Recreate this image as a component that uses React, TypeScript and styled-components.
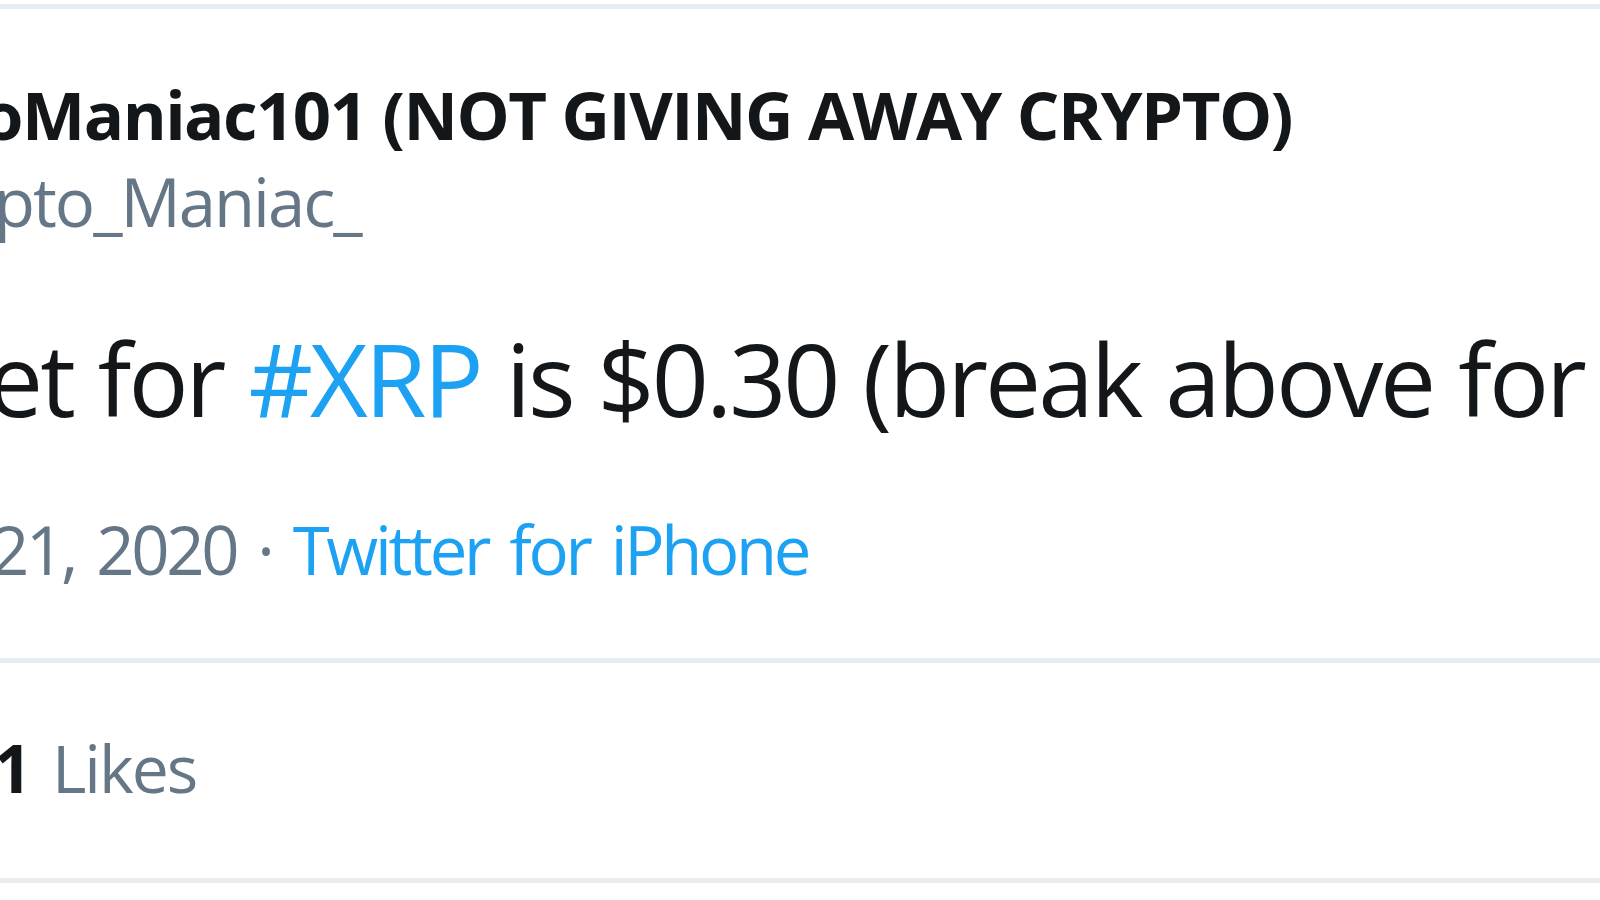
import React from "react";
import styled, { createGlobalStyle } from "styled-components";

const Global = createGlobalStyle`
  html, body { margin: 0; padding: 0; background: #ffffff; }
  body { font-family: "Open Sans", "Noto Sans", Arial, sans-serif; }
`;

const Page = styled.div`
  width: 1600px;
  height: 900px;
  overflow: hidden;
  background: #ffffff;
  display: flex;
  flex-direction: column;
`;

const Rule = styled.div<{ $top: number }>`
  height: 5px;
  margin-top: ${(p) => p.$top}px;
  background: #e6ecf0;
  flex: none;
`;

const Line = styled.div<{
  $size: number;
  $lh: number;
  $top: number;
  $indent?: number;
  $weight?: number;
  $color?: string;
  $spacing?: number;
  $words?: number;
}>`
  font-size: ${(p) => p.$size}px;
  line-height: ${(p) => p.$lh}px;
  margin-top: ${(p) => p.$top}px;
  margin-left: ${(p) => p.$indent ?? 0}px;
  font-weight: ${(p) => p.$weight ?? 400};
  color: ${(p) => p.$color ?? "#14171a"};
  letter-spacing: ${(p) => p.$spacing ?? 0}px;
  word-spacing: ${(p) => p.$words ?? 0}px;
  white-space: pre;
  flex: none;
`;

/* text that hangs to the left of the line start (clipped by the page edge) */
const Hang = styled.span`
  display: inline-flex;
  width: 0;
  justify-content: flex-end;
  white-space: pre;
`;

const Link = styled.span`
  color: #1da1f2;
`;

const Muted = styled.span`
  color: #657786;
`;

const Strong = styled.span`
  color: #14171a;
  font-weight: 700;
`;

export default function App() {
  return (
    <>
      <Global />
      <Page>
        <Rule $top={4} />
        <Line $size={67} $lh={80} $top={65} $indent={22} $weight={700} $spacing={-1.5}>
          <Hang>Crypto</Hang>Maniac101 (NOT GIVING AWAY CRYPTO)
        </Line>
        <Line $size={67} $lh={80} $top={7} $indent={-6} $color="#657786" $spacing={-2}>
          <Hang>@Cry</Hang>pto_Maniac_
        </Line>
        <Line $size={100} $lh={120} $top={77} $indent={-13} $spacing={-3} $words={2}>
          <Hang>Next targ</Hang>et for <Link>#XRP</Link> is $0.30 (break above for a
          new high)
        </Line>
        <Line
          $size={67}
          $lh={80}
          $top={71}
          $indent={26}
          $color="#657786"
          $spacing={-3.3}
          $words={7}
        >
          <Hang>3:08 PM · Mar 2</Hang>1, 2020 · <Link>Twitter for iPhone</Link>
        </Line>
        <Rule $top={69} />
        <Line
          $size={66}
          $lh={80}
          $top={64}
          $indent={-6}
          $color="#657786"
          $spacing={-2}
          $words={7}
        >
          <Strong>1</Strong> <Muted>Likes</Muted>
        </Line>
        <Rule $top={71} />
      </Page>
    </>
  );
}
